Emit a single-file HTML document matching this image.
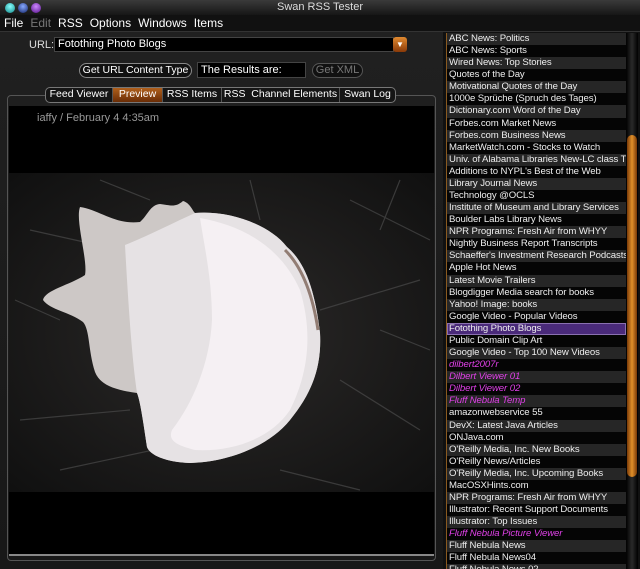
<!DOCTYPE html>
<html><head><meta charset="utf-8"><style>
*{margin:0;padding:0;box-sizing:border-box}
body{width:640px;height:569px;overflow:hidden;background:#1a1a1a;font-family:"Liberation Sans",sans-serif;color:#eee;position:relative}
.abs{position:absolute}
#title{left:0;top:0;width:640px;height:15px;background:linear-gradient(#3a3a3a,#161616);font-size:11px;text-align:center;line-height:15px;color:#ddd}
.dot{position:absolute;top:3px;width:10px;height:10px;border-radius:50%}
#menu{left:0;top:15px;width:640px;height:17px;background:#111;font-size:12px;line-height:17px;color:#fff;border-bottom:1px solid #333}
#menu span{margin-left:4px;margin-right:3px}
#left{left:0;top:32px;width:443px;height:537px;background:linear-gradient(#202020,#181818)}
.btn{position:absolute;border:1px solid #888;border-radius:8px;font-size:11px;text-align:center;line-height:13px;color:#fff;background:#111;white-space:nowrap}
.tab{position:absolute;top:88px;height:14px;font-size:10.5px;line-height:13px;text-align:center;color:#fff;border-right:1px solid #555;white-space:nowrap}
#list{left:447px;top:33px;width:179px;height:536px;overflow:hidden;font-size:9.6px}
.r{height:12.08px;line-height:12px;padding-left:2px;white-space:nowrap;overflow:hidden;letter-spacing:-0.1px}
.r:nth-child(odd){background:#262626}
.r:nth-child(even){background:#050505}
.m{color:#e040e8;font-style:italic}
</style></head><body>
<div id="title" class="abs">Swan RSS Tester
<div class="dot" style="left:5px;background:radial-gradient(circle at 50% 35%,#8ff,#188)"></div>
<div class="dot" style="left:18px;background:radial-gradient(circle at 50% 35%,#8af,#126)"></div>
<div class="dot" style="left:31px;background:radial-gradient(circle at 50% 35%,#c8f,#518)"></div>
</div>
<div id="menu" class="abs"><span>File</span><span style="color:#777">Edit</span><span>RSS</span><span>Options</span><span>Windows</span><span>Items</span></div>
<div id="left" class="abs"></div>
<div class="abs" style="left:29px;top:39px;font-size:11px;color:#ddd">URL:</div>
<div class="abs" style="left:54px;top:37px;width:340px;height:15px;background:#000;border:1px solid #444;font-size:11px;line-height:13px;padding-left:3px;color:#fff">Fotothing Photo Blogs</div>
<div class="abs" style="left:393px;top:37px;width:14px;height:15px;border-radius:3px;background:linear-gradient(#e08a30,#8a3a08);color:#fff;font-size:8px;text-align:center;line-height:15px">▼</div>
<div class="btn" style="left:79px;top:63px;width:113px;height:15px;font-size:10.5px">Get URL Content Type</div>
<div class="abs" style="left:197px;top:62px;width:109px;height:16px;background:#000;border:1px solid #444;font-size:11px;line-height:14px;padding-left:3px;color:#fff">The Results are:</div>
<div class="btn" style="left:312px;top:63px;width:51px;height:15px;color:#777;border-color:#555">Get XML</div>
<div class="abs" style="left:7px;top:95px;width:429px;height:466px;border:1px solid #555;border-radius:4px"></div>
<div class="abs" style="left:45px;top:87px;width:351px;height:16px;border:1px solid #777;border-radius:5px;background:#151515"></div>
<div class="tab" style="left:46px;width:67px">Feed Viewer</div>
<div class="tab" style="left:113px;width:50px;background:linear-gradient(#b0601c,#6a2c06)">Preview</div>
<div class="tab" style="left:163px;width:59px">RSS Items</div>
<div class="tab" style="left:222px;width:118px">RSS&nbsp; Channel Elements</div>
<div class="tab" style="left:340px;width:55px;border-right:none">Swan Log</div>
<div class="abs" style="left:9px;top:106px;width:425px;height:450px;background:#000"></div>
<div class="abs" style="left:9px;top:554px;width:425px;height:2px;background:#888"></div>
<div class="abs" style="left:37px;top:112px;font-size:11px;color:#999">iaffy / February 4 4:35am</div>
<svg class="abs" style="left:9px;top:173px" width="425" height="319" viewBox="9 173 425 319">
<defs><radialGradient id="bg" cx="50%" cy="50%" r="70%"><stop offset="0" stop-color="#2c2a29"/><stop offset="1" stop-color="#101010"/></radialGradient></defs>
<rect x="9" y="173" width="425" height="319" fill="url(#bg)"/>
<g stroke="#4a4a4a" stroke-width="1.2" opacity=".7" fill="none"><path d="M20 420 L130 410 M320 310 L420 280 M340 380 L420 430 M30 230 L120 250 M350 200 L430 240 M250 180 L260 220 M60 470 L200 440 M15 300 L60 320 M380 330 L430 350 M280 470 L360 490 M100 180 L150 200 M400 180 L380 230"/></g>
<path d="M43 300 C45 290 70 285 85 275 C88 260 75 220 80 207 C100 210 115 225 140 222 C148 215 150 205 160 204 C170 205 175 208 183 201 C190 203 192 210 195 213 C230 210 270 225 287 247 C305 262 315 290 320 333 C322 370 310 395 290 420 C270 445 230 462 190 463 C165 462 150 455 147 447 C143 420 140 400 137 393 C115 390 100 385 95 372 C88 350 90 330 83 322 C70 312 50 310 43 300 Z" fill="#cdc8c6"/>
<path d="M125 245 C150 235 175 222 195 213 C230 210 270 225 287 247 C305 262 315 290 320 333 C322 370 310 395 290 420 C270 445 230 462 190 463 C165 462 150 455 147 447 C143 420 140 400 137 393 C132 360 128 300 125 245 Z" fill="#e6e2e4"/>
<path d="M200 218 C240 225 280 245 300 290 C312 330 310 370 290 410 C270 440 230 452 195 450 C175 445 168 440 172 430 C195 400 210 360 212 320 C212 280 205 250 200 218 Z" fill="#f5f0f3"/>
<path d="M285 250 C300 265 312 290 318 330" stroke="#5a3a2a" stroke-width="3" fill="none" opacity=".6"/>
</svg>
<div class="abs" style="left:443px;top:32px;width:197px;height:537px;background:#111"></div>
<div class="abs" style="left:446px;top:33px;width:1px;height:536px;background:#8a5a20"></div>
<div id="list" class="abs">
<div class="r">ABC News: Politics</div><div class="r">ABC News: Sports</div><div class="r">Wired News: Top Stories</div><div class="r">Quotes of the Day</div><div class="r">Motivational Quotes of the Day</div><div class="r">1000e Sprüche (Spruch des Tages)</div><div class="r">Dictionary.com Word of the Day</div><div class="r">Forbes.com Market News</div><div class="r">Forbes.com Business News</div><div class="r">MarketWatch.com - Stocks to Watch</div><div class="r">Univ. of Alabama Libraries New-LC class TL</div><div class="r">Additions to NYPL's Best of the Web</div><div class="r">Library Journal News</div><div class="r">Technology @OCLS</div><div class="r">Institute of Museum and Library Services</div><div class="r">Boulder Labs Library News</div><div class="r">NPR Programs: Fresh Air from WHYY</div><div class="r">Nightly Business Report Transcripts</div><div class="r">Schaeffer's Investment Research Podcasts</div><div class="r">Apple Hot News</div><div class="r">Latest Movie Trailers</div><div class="r">Blogdigger Media search for books</div><div class="r">Yahoo! Image: books</div><div class="r">Google Video - Popular Videos</div><div class="r" style="background:#4a2a7a;outline:1px solid #8a70b0;outline-offset:-1px">Fotothing Photo Blogs</div><div class="r">Public Domain Clip Art</div><div class="r">Google Video - Top 100 New Videos</div><div class="r m">dilbert2007r</div><div class="r m">Dilbert Viewer 01</div><div class="r m">Dilbert Viewer 02</div><div class="r m">Fluff Nebula Temp</div><div class="r">amazonwebservice 55</div><div class="r">DevX: Latest Java Articles</div><div class="r">ONJava.com</div><div class="r">O'Reilly Media, Inc. New Books</div><div class="r">O'Reilly News/Articles</div><div class="r">O'Reilly Media, Inc. Upcoming Books</div><div class="r">MacOSXHints.com</div><div class="r">NPR Programs: Fresh Air from WHYY</div><div class="r">Illustrator: Recent Support Documents</div><div class="r">Illustrator: Top Issues</div><div class="r m">Fluff Nebula Picture Viewer</div><div class="r">Fluff Nebula News</div><div class="r">Fluff Nebula News04</div><div class="r">Fluff Nebula News 02</div>
</div>
<div class="abs" style="left:626px;top:33px;width:12px;height:536px;background:linear-gradient(90deg,#000,#2a2a2a,#000)"></div>
<div class="abs" style="left:627px;top:135px;width:10px;height:342px;border-radius:5px;background:linear-gradient(90deg,#7a3a08,#e0902a,#7a3a08)"></div>
</body></html>
